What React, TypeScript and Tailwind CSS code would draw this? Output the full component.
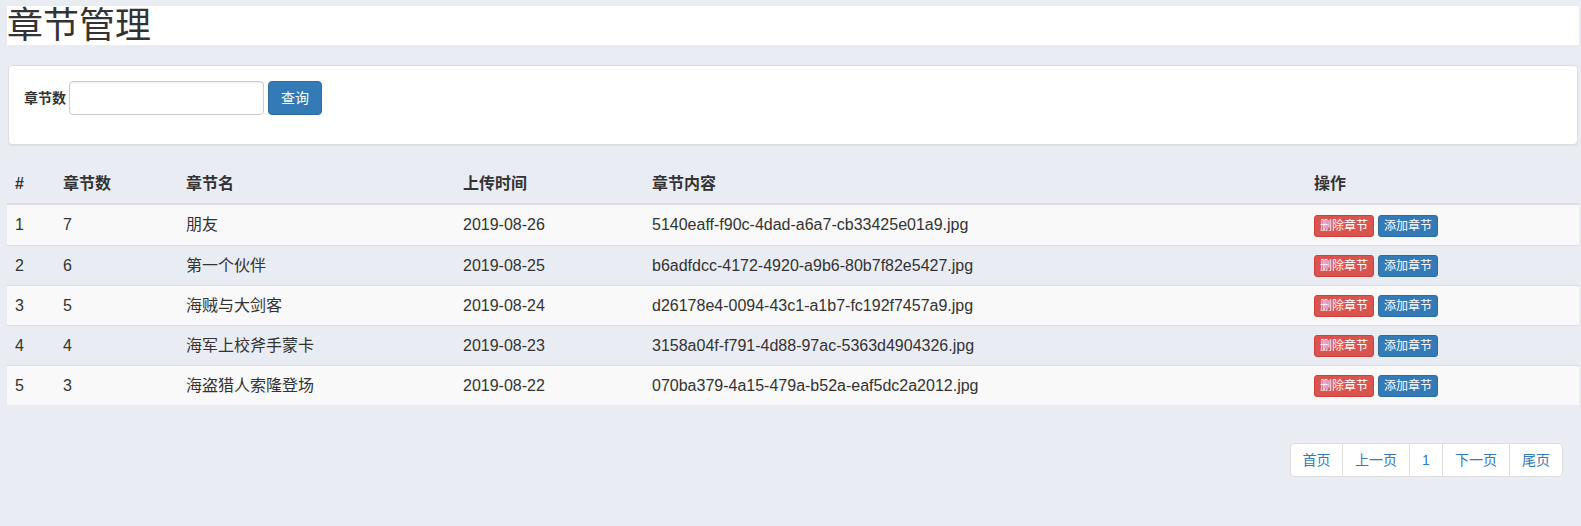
import React from "react";

const rows = [
  { id: 1, num: 7, name: "朋友", date: "2019-08-26", file: "5140eaff-f90c-4dad-a6a7-cb33425e01a9.jpg" },
  { id: 2, num: 6, name: "第一个伙伴", date: "2019-08-25", file: "b6adfdcc-4172-4920-a9b6-80b7f82e5427.jpg" },
  { id: 3, num: 5, name: "海贼与大剑客", date: "2019-08-24", file: "d26178e4-0094-43c1-a1b7-fc192f7457a9.jpg" },
  { id: 4, num: 4, name: "海军上校斧手蒙卡", date: "2019-08-23", file: "3158a04f-f791-4d88-97ac-5363d4904326.jpg" },
  { id: 5, num: 3, name: "海盗猎人索隆登场", date: "2019-08-22", file: "070ba379-4a15-479a-b52a-eaf5dc2a2012.jpg" },
];

const grid = "grid grid-cols-[48px_123px_277px_189px_662px_273px]";

export default function App() {
  return (
    <div className="min-h-screen bg-[#e9ecf3] pl-[7px] pr-[2px] pt-[6px] pb-[20px] text-[14px] text-[#333] font-['Liberation_Sans','Noto_Sans_CJK_SC',sans-serif]">
      <h1 className="bg-white text-[36px] leading-[39px] font-normal text-[#333]">章节管理</h1>

      <div className="mt-[20px] ml-px mr-px bg-white border border-[#ddd] rounded-[4px] shadow-[0_1px_1px_rgba(0,0,0,0.05)] pl-[15px] pt-[15px] pb-[29px]">
        <div className="flex items-center">
          <label className="font-bold text-[14px] mr-[3px] leading-[20px]">章节数</label>
          <input
            type="text"
            className="w-[195px] h-[34px] border border-[#ccc] rounded-[4px] bg-white shadow-[inset_0_1px_1px_rgba(0,0,0,0.075)] px-3 outline-none"
          />
          <button className="ml-[4px] h-[34px] px-[12px] bg-[#337ab7] border border-[#2e6da4] rounded-[4px] text-white text-[14px] leading-[20px]">
            查询
          </button>
        </div>
      </div>

      <div className="mt-[19px] text-[16px]">
        <div className={`${grid} h-[41px] items-center border-b-2 border-[#ddd] font-bold`}>
          <div className="px-2">#</div>
          <div className="px-2">章节数</div>
          <div className="px-2">章节名</div>
          <div className="px-2">上传时间</div>
          <div className="px-2">章节内容</div>
          <div className="px-2">操作</div>
        </div>
        {rows.map((r, i) => (
          <div
            key={r.id}
            className={`${grid} h-[40px] items-center ${i > 0 ? "border-t border-[#ddd]" : ""} ${i % 2 === 0 ? "bg-[#f9f9f9]" : ""}`}
          >
            <div className="px-2">{r.id}</div>
            <div className="px-2">{r.num}</div>
            <div className="px-2">{r.name}</div>
            <div className="px-2">{r.date}</div>
            <div className="px-2">{r.file}</div>
            <div className="px-2 flex gap-[4px] pt-[1px]">
              <button className="h-[22px] w-[60px] bg-[#d9534f] border border-[#d43f3a] rounded-[3px] text-white text-[12px] leading-[18px]">
                删除章节
              </button>
              <button className="h-[22px] w-[60px] bg-[#337ab7] border border-[#2e6da4] rounded-[3px] text-white text-[12px] leading-[18px]">
                添加章节
              </button>
            </div>
          </div>
        ))}
      </div>

      <div className="flex justify-end mt-[38px] pr-[16px]">
        <div className="flex text-[#337ab7] text-[14px] leading-[20px]">
          <a className="block w-[53px] text-center py-[6px] bg-white border border-[#ddd] rounded-l-[4px]">首页</a>
          <a className="block w-[68px] text-center py-[6px] bg-white border border-[#ddd] -ml-px">上一页</a>
          <a className="block w-[34px] text-center py-[6px] bg-white border border-[#ddd] -ml-px">1</a>
          <a className="block w-[68px] text-center py-[6px] bg-white border border-[#ddd] -ml-px">下一页</a>
          <a className="block w-[54px] text-center py-[6px] bg-white border border-[#ddd] -ml-px rounded-r-[4px]">尾页</a>
        </div>
      </div>
    </div>
  );
}
